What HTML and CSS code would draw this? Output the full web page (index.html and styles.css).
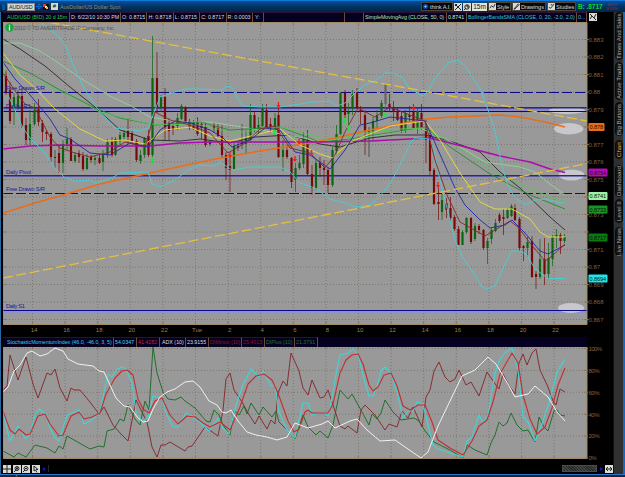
FILE: index.html
```html
<!DOCTYPE html>
<html lang="en">
<head>
    <meta charset="UTF-8">
    <title>AUD/USD Chart</title>
    <link rel="stylesheet" href="styles.css">
</head>
<body>
<div class="window">
    <header class="titlebar">
        <span class="link-dot"></span>
        <span class="symbol">AUD/USD</span>
        <span class="picker">✣</span>
        <svg class="flag" viewBox="0 0 6 6"><path fill="#111" d="M0 0h6v6H0z"/><path fill="#e33" d="M0 0h3v3H0z"/><path fill="#fff" d="M2 2h2v2H2z"/><path fill="#fb3" d="M3 3h2v2H3z"/></svg>
        <span class="hash">#</span>
        <span class="desc">AusDollar/US Dollar Spot</span>
        <div class="tools">
            <span class="tool think"><svg viewBox="0 0 8 8"><circle cx="4" cy="4" r="3.2" fill="#0a3f94"/><circle cx="4" cy="4" r="1.2" fill="#adf"/></svg>think A.I.</span>
            <svg class="icon" viewBox="0 0 8 8"><path d="M1 1l6 6M7 1L1 7M1 3l2-2"/></svg>
            <svg class="icon" viewBox="0 0 8 8"><circle cx="4" cy="4" r="2.2"/><path d="M1 7l2-2M4 2v2h2"/></svg>
            <span class="period">15m</span>
            <span class="tool style"><svg class="icon" viewBox="0 0 8 8"><path d="M1 6l2-3 2 2 2-4"/></svg>Style</span>
            <span class="tool draw"><svg class="icon" viewBox="0 0 8 8"><path d="M1 7l5-6 1 1-5 5z"/></svg>Drawings</span>
            <span class="tool studies"><svg class="icon" viewBox="0 0 8 8"><path d="M1 5l2 1 4-5M3 2h2"/></svg>Studies</span>
            <span class="bid">B: .8717</span>
            <span class="change">-.0082<br>-0.93%</span>
        </div>
    </header>

    <div class="body">
        <main class="charts">
            <div class="info price-info">
                <span class="cell name">AUD/USD (BID) 20 d 15m</span>
                <span class="cell date">D: 6/22/10 10:30 PM</span>
                <span class="cell ohlc">O: 0.8715</span>
                <span class="cell ohlc">H: 0.8718</span>
                <span class="cell ohlc">L: 0.8715</span>
                <span class="cell ohlc">C: 0.8717</span>
                <span class="cell ohlc">R: 0.0003</span>
                <span class="cell yval">Y:</span>
                <span class="cell blank"></span>
                <span class="cell gap"></span>
                <span class="cell sma">SimpleMovingAvg (CLOSE, 50, 0)</span>
                <span class="cell smaval">0.8741</span>
                <span class="cell boll">BollingerBandsSMA (CLOSE, 0, 20, -2.0, 2.0)</span>
                <span class="cell more">0...</span>
                <svg class="icon corner" viewBox="0 0 8 8"><path d="M1 6l2-3 2 2 2-4M1 1l6 6"/></svg>
            </div>

            <svg class="price" viewBox="3 22 610 315">
                <rect class="plot" x="3" y="22" width="584" height="302"/>
                <g id="price-grid"></g>

                <path class="band" d="M3 107.500h584v4H3z"/>
                <path class="glow" d="M3 110h584M3 177.200h584M3 312h584"/>
                <g class="zone">
                    <ellipse cx="567" cy="110.5" rx="18" ry="3.5"/>
                    <ellipse cx="568.7" cy="128.7" rx="14.7" ry="5.7"/>
                    <ellipse cx="571.5" cy="175" rx="12.8" ry="5.5"/>
                    <ellipse cx="571" cy="308" rx="13" ry="5"/>
                </g>
                <path class="level soft" d="M3 107.800h584M3 175.8h584"/>
                <path class="level" d="M3 111.5h584M3 310.5h584"/>
                <path class="level dashed" d="M3 92.5h584M3 193.5h584"/>

                <g id="candles"></g>

                <polyline class="line black" points="3,39 20,49 45,66 70,87 95,107 120,130 150,140 180,141 200,139 230,143 255,137 290,135 320,144 340,147 370,138 395,135 425,135 450,141 480,152 500,172 520,188 550,217 565,230"/>
                <polyline class="line pale" points="3,43 20,43 40,51 60,64 80,78 110,96 131,106 150,117 180,122 210,122 260,130 320,141 360,138 420,128 450,141 485,162 520,167 535,172 550,184 565,195"/>
                <polyline class="line green" points="3,61 30,73 60,90 95,108 120,118 155,125 200,122 230,130 280,127 320,142 350,139 425,127 450,147 490,174 520,190 535,197 565,209"/>
                <polyline class="line lime" points="3,70 30,78 70,96 100,112 150,124 200,125 235,133 280,127 330,140 370,132 400,129 425,128 450,142 500,175 540,193 565,202"/>
                <polyline class="line orange" points="3,213 35,203 70,193 100,184 150,173 210,160 260,151 310,143 340,137 360,132 400,124 427,119 450,117 500,115 520,117 545,122 565,127"/>
                <polyline class="line magenta" points="3,149 30,146 60,145 100,146 150,146 180,143 210,142 320,142 370,141 430,138 450,143 500,156 530,162 550,169 565,172.5"/>
                <polyline class="line cyan" points="40,22 50,30 57,35 65,45 75,69 85,90 97,108 115,128 140,131 148,128 155,110 160,97 175,92 185,89 200,89 222,90 226,87 231,86 235,94 243,106 260,107 280,107 300,104 312,102 330,101 337,106 345,103 355,93 365,85 375,81 385,73 392,73 402,77 410,89 423,96 428,91 436,77 448,63 458,60 465,66 480,89 487,107 495,131 502,166 508,186 515,198 526,205 535,200 545,199 560,203 565,202"/>
                <polyline class="line cyan" points="8,95 23,128 30,138 45,153 55,168 65,178 75,181 90,180 95,183 112,178 120,173 148,172 152,184 160,187 175,180 188,170 200,165 215,166 220,162 232,170 250,167 280,167 290,172 300,183 315,188 330,199 345,203 355,207 370,205 380,196 390,184 400,165 405,155 410,143 415,138 430,139 435,155 440,180 448,212 455,240 463,258 475,275 482,287 487,289 495,286 505,264 512,251 520,251 527,255 535,269 548,278.5 565,278.5"/>
                <polyline class="line yellow" points="3,53 20,75 35,88 55,109 80,129 105,141 125,140 145,144 165,130 190,127 210,136 230,141 255,135 280,129 300,145 320,154 332,158 350,142 370,134 390,126 425,121 440,140 460,173 480,202 495,209 512,209 530,219 540,232 548,237 565,237"/>
                <polyline class="line blue" points="3,62 15,79 30,95 40,107 50,119 60,135 70,139 90,153 110,155 130,143 148,147 160,130 175,121 190,123 210,130 222,137 232,147 250,140 265,128 280,130 295,152 310,155 330,169 345,150 360,125 370,123 390,117 425,121 435,143 455,188 465,205 479,219 490,228 505,225 512,220 525,233 540,251 548,254 565,245"/>
                <polyline class="line maroon" points="3,73 18,95 25,104 35,108 50,137 60,148 75,153 90,157 110,152 125,142 145,147 155,112 170,120 190,125 210,133 228,153 245,143 260,129 275,126 290,148 310,153 325,168 335,155 345,132 358,108 375,117 390,107 425,121 435,160 447,195 460,222 485,236 510,221 518,227 530,243 545,261 552,256 565,244"/>

                <path class="trend" d="M36 20L587 121M3 278L587 163.5"/>
                <g id="arrows"></g>

                <g class="level-name">
                    <text x="6" y="90" textLength="39">Free Drawn S/R</text>
                    <text x="6" y="107.5" textLength="25">Daily R1</text>
                    <text x="6" y="174" textLength="25">Daily Pivot</text>
                    <text x="6" y="191" textLength="39">Free Drawn S/R</text>
                    <text x="6" y="308" textLength="19">Daily S1</text>
                </g>
                <circle cx="9.5" cy="27.5" r="4.2" fill="#19a53c"/>
                <path d="M9.5 24.7v1M9.5 26.5v4" stroke="#fff" stroke-width="1.3"/>
                <text class="copy" x="14" y="30" textLength="101">2010 © TD AMERITRADE IP Company, Inc.</text>
                <path class="frame" d="M3 22V324.500H587V22.500H3"/>
                <g id="price-axis" class="axis"></g>
                <g id="time-axis" class="axis"></g>
                <g id="tags" class="tags"></g>
            </svg>

            <div class="info study-info">
                <span class="cell smi">StochasticMomentumIndex (46.0, -46.0, 3, 5)</span>
                <span class="cell smival">54.0347</span>
                <span class="cell redval">41.4282</span>
                <span class="cell adx">ADX (10)</span>
                <span class="cell adxval">23.9155</span>
                <span class="cell minus">DIMinus (10)</span>
                <span class="cell minusval">25.4613</span>
                <span class="cell plus">DIPlus (10)</span>
                <span class="cell plusval">21.3791</span>
            </div>

            <svg class="study" viewBox="3 347 610 116">
                <rect class="plot" x="3" y="347" width="584" height="111"/>
                <g id="study-grid"></g>
                <polyline class="line dminus" points="3,390 7,386 10,355 18,380 26,357 33,384 38,398 47,373 51,375 55,369 60,388 67,401 71,388 74,390 80,390 90,402 99,414 104,407 113,425 120,433 128,441 136,400 140,408 147,422 152,447 157,457 161,445 165,445 170,442 185,451 188,447 192,446 205,427 218,436 223,410 226,379 230,373 234,390 242,402 248,413 255,424 259,416 267,429 271,420 275,424 278,393 283,381 287,386 291,353 299,371 303,388 308,395 312,380 320,398 324,397 328,390 334,408 340,426 345,429 348,426 357,433 361,410 365,405 375,415 385,430 389,424 397,427 402,411 408,418 413,407 422,427 426,397 430,390 434,371 439,362 445,377 450,382 455,379 459,370 466,385 471,382 479,396 487,372 493,381 499,389 503,374 510,387 515,394 519,363 523,354 527,365 532,353 536,349 540,370 548,387 553,401 556,405 560,389 565,392"/>
                <polyline class="line dplus" points="3,451 14,457 18,453 26,457 35,445 47,448 55,453 59,446 63,449 67,436 90,449 99,446 104,447 107,431 114,429 120,419 124,421 128,405 135,419 140,425 145,401 149,410 153,347 157,373 163,392 168,399 175,400 181,397 185,401 195,408 206,421 210,422 214,410 219,415 223,425 230,435 234,411 239,415 244,406 247,414 251,403 259,415 263,407 272,417 276,411 279,422 287,430 295,439 303,415 308,427 316,435 320,431 328,438 333,425 340,390 348,399 352,394 362,412 369,425 372,414 377,419 381,413 385,400 393,412 401,420 414,418 419,421 425,431 434,442 450,450 463,458 467,445 475,450 487,455 491,443 495,435 499,422 503,426 507,423 511,413 517,425 523,431 528,430 535,442 539,417 544,427 548,431 554,411 557,410 560,415 565,416"/>
                <polyline class="line smi-fast" points="3,413 10,441 18,426 26,439 30,434 35,415 39,409 46,414 50,428 55,438 59,441 67,415 79,410 84,424 92,420 100,412 104,392 108,374 112,377 116,370 122,367 126,369 132,383 136,412 143,422 148,417 153,396 162,398 166,413 173,427 178,427 186,413 191,416 200,422 209,431 218,418 223,428 229,434 236,405 243,385 251,369 259,377 263,371 271,386 275,385 279,412 287,430 295,438 299,420 303,403 308,403 312,415 320,413 325,413 328,416 332,398 337,369 340,355 348,353 353,349 358,355 365,382 369,396 373,396 377,387 381,371 385,367 391,373 397,392 403,418 408,411 413,411 417,402 423,404 428,425 433,445 438,449 450,453 463,457 467,441 472,437 479,415 483,423 488,415 495,373 500,359 505,353 512,348 518,370 523,417 528,422 535,441 542,424 550,400 557,372 565,359"/>
                <polyline class="line smi-slow" points="3,411 10,430 15,434 19,429 26,435 30,434 38,416 45,414 50,424 59,436 63,435 71,416 79,412 84,419 92,417 100,413 106,394 115,378 122,371 127,370 133,375 138,399 143,409 149,413 155,401 162,398 170,415 178,424 187,416 195,417 203,423 210,427 220,422 230,430 240,407 248,384 256,376 264,374 272,380 278,393 288,421 294,432 299,429 305,412 308,410 312,413 328,413 333,404 340,373 346,360 352,355 358,354 363,364 369,385 373,391 378,387 384,375 391,373 397,386 403,406 410,410 418,405 425,405 432,422 438,440 450,448 463,455 472,441 479,426 487,420 493,402 500,374 512,353 518,363 523,395 530,419 537,434 545,427 552,408 558,385 565,368"/>
                <polyline class="line adx-line" points="3,392 8,387 14,371 20,365 27,353 32,351 40,356 47,354 55,348 63,351 68,359 78,364 93,366 99,371 104,372 110,385 116,398 124,406 130,407 138,418 143,422 148,421 153,409 160,397 167,392 175,389 185,382 193,381 200,387 209,401 217,405 222,412 226,413 231,410 238,421 247,432 256,435 267,437 277,440 287,437 295,423 308,428 322,424 328,421 335,428 350,421 357,419 367,430 380,441 395,440 405,447 421,458 428,452 438,426 450,401 462,376 475,370 488,357 496,364 508,384 515,397 528,394 535,386 548,397 557,412 565,421"/>
                <path class="frame" d="M3 347V458.500H587V347"/>
                <g id="percent-axis" class="axis"></g>
            </svg>

            <div class="scrollrow">
                <svg class="icon" viewBox="0 0 8 8"><path d="M4 0v8M0 4h8"/></svg>
                <svg class="icon" viewBox="0 0 8 8"><circle cx="4" cy="3.500" r="2"/><path d="M1 7l2-2M4 2v3M3 3.500h2"/></svg>
                <svg class="icon" viewBox="0 0 8 8"><circle cx="4" cy="3.500" r="2"/><path d="M1 7l2-2M3 3.500h2"/></svg>
                <svg class="icon" viewBox="0 0 8 8"><path d="M2 1v5l1.500-1L5 7.500M2 1l4 3.500H4"/></svg>
                <span class="arrow left"></span>
                <span class="track"><span class="thumb"></span></span>
                <span class="arrow right"></span>
                <svg class="icon" viewBox="0 0 8 8"><path d="M1 4h6M3 2L1 4l2 2M5 2l2 2-2 2"/></svg>
            </div>
        </main>

        <nav class="tabs">
            <span class="tab times">Times And Sales</span>
            <span class="tab active-trader">Active Trader</span>
            <span class="tab buttons">Big Buttons</span>
            <span class="tab chart">Chart</span>
            <span class="tab dash">Dashboard</span>
            <span class="tab level2">Level II</span>
            <span class="tab news">Live News</span>
        </nav>
    </div>
    <footer class="bottom"><svg class="handle" viewBox="0 0 13 3"><path fill="#222" d="M0 0h13v3H0z"/><path fill="#b88716" d="M6.500 0l2 2h-4z"/></svg></footer>
</div>
<script src="script.js"></script>
</body>
</html>
```
FILE: styles.css
```css
* {
    box-sizing: border-box;
}
body {
    margin: 0;
    background: #000;
    font-family: "Liberation Sans", Arial, sans-serif;
    overflow: hidden;
}
.window {
    width: 625px;
    height: 477px;
    display: flex;
    flex-direction: column;
    border-top: 1px solid #1478d8;
}
svg {
    display: block;
    flex: none;
}

/* title bar */
.titlebar {
    height: 11px;
    flex: none;
    display: flex;
    align-items: center;
    padding-left: 2px;
    background: linear-gradient(#07509a, #013565 50%, #012448);
    font-size: 6px;
    line-height: 8px;
    white-space: nowrap;
}
.link-dot {
    width: 3px;
    height: 6px;
    margin-right: 2px;
    background: #07539a;
}
.symbol {
    width: 28px;
    height: 8px;
    padding-left: 1px;
    background: #d4d4ce;
    color: #111;
    border: 1px solid #888;
    line-height: 6px;
    font-size: 5.4px;
    letter-spacing: -.1px;
}
.picker {
    width: 8px;
    color: #1479dc;
    text-align: center;
    font-size: 7px;
}
.flag {
    width: 6px;
    height: 6px;
    margin-right: 1px;
}
.hash {
    width: 7px;
    height: 7px;
    margin: 0 2px 0 1px;
    background: #d8d8d0;
    color: #000;
    line-height: 7px;
    text-align: center;
}
.desc {
    color: #948869;
    font-size: 5.4px;
}
.tools {
    display: flex;
    align-items: center;
    gap: 1px;
    width: 204px;
    margin-left: auto;
    font-size: 6px;
    color: #d4d4d0;
}
.tool {
    flex: none;
    display: flex;
    align-items: center;
    gap: 1px;
    height: 9px;
    background: #050a10;
    border: 1px solid #4c463b;
    font-size: 5.7px;
    letter-spacing: -.1px;
}
.tool svg {
    width: 7px;
    height: 7px;
}
.think { width: 32px; }
.style { width: 23px; }
.draw { width: 34px; }
.studies { width: 29px; }
.icon {
    width: 8px;
    height: 8px;
    background: #dcdcd6;
    fill: none;
    stroke: #222;
    stroke-width: 1;
}
.period {
    width: 15px;
    flex: none;
    height: 8px;
    background: #e4e4df;
    color: #111;
    text-align: center;
    line-height: 8px;
    font-size: 6.5px;
}
.bid {
    flex: none;
    width: 27px;
    padding-left: 1px;
    color: #12d52c;
    font-size: 6.4px;
    font-weight: bold;
}
.change {
    color: #c31720;
    font-size: 4.1px;
    line-height: 4px;
}

.body {
    flex: 1;
    display: flex;
    min-height: 0;
}
.charts {
    width: 613px;
    padding-left: 2px;
    border-left: 1px solid #2569a0;
}

/* info strips above each plot */
.info {
    width: 610px;
    height: 10px;
    display: flex;
    font-size: 5.3px;
    line-height: 9px;
    color: #dcdcdf;
    white-space: nowrap;
}
.cell {
    flex: none;
    padding-left: 2px;
    overflow: hidden;
    background: #05001f;
    border-right: 1px solid #6a4a38;
    border-top: 1px solid #2a1230;
    line-height: 9px;
}
.name { width: 67px; padding-left: 4px; color: #22cb3f; letter-spacing: -.05px; }
.date { width: 51px; padding-left: 1px; letter-spacing: -.03px; }
.ohlc { width: 26.4px; padding-left: 1px; }
.yval { width: 11px; }
.blank { width: 81px; }
.gap { width: 19px; }
.sma { width: 83px; padding-left: 1px; color: #b0e2b1; letter-spacing: -.03px; }
.smaval { width: 20px; color: #c4ebc4; padding-left: 1px; }
.boll { width: 110px; color: #2cc8dc; padding-left: 1px; }
.more { width: 10px; padding-left: 1px; color: #2cc8dc; }
.corner { margin: 1px 0 0 2px; }
.study-info { width: 584px; background: #05001f; }
.smi { width: 111px; padding-left: 4px; color: #35cfeb; letter-spacing: -.03px; }
.smival { width: 23px; color: #40d8f2; padding-left: 1px; }
.redval { width: 23px; color: #c02340; padding-left: 1px; }
.adx { width: 26px; }
.adxval { width: 23px; padding-left: 1px; }
.minus { width: 33px; color: #8d1830; padding-left: 1px; }
.minusval { width: 23px; color: #8d1830; padding-left: 1px; }
.plus { width: 30px; color: #1b7636; padding-left: 1px; }
.plusval { width: 23px; color: #1b7636; padding-left: 1px; }

/* plots */
.price {
    width: 610px;
    height: 315px;
}
.study {
    width: 610px;
    height: 116px;
}
.plot { fill: #999; }
.frame { fill: none; stroke: #a18b66; stroke-width: 1; }
.grid { stroke: #776e5f; stroke-width: .8; stroke-dasharray: 1 2; fill: none; }
.tick { stroke: #8e7043; stroke-width: .8; }
.band { fill: #7777a8; }
.glow { stroke: #8d8dd5; stroke-width: 1.5; }
.zone { fill: #d2d2d8; fill-opacity: .8; }
.level { stroke: #080888; stroke-width: 1.2; fill: none; }
.level.soft { stroke: #28288a; stroke-width: 1.6; }
.level.dashed { stroke-dasharray: 10 3; }
.level-name { fill: #1a1a9b; font-size: 5.8px; }
.copy { fill: #555; font-size: 5.6px; }
.line { fill: none; stroke-width: .9; stroke-linejoin: round; }
.black { stroke: #292929; }
.pale { stroke: #8fd49b; }
.green { stroke: #238c31; }
.lime { stroke: #59c453; }
.orange { stroke: #ec6c18; stroke-width: 1.4; }
.magenta { stroke: #ac0bad; stroke-width: 1.4; }
.cyan { stroke: #46cfd2; }
.yellow { stroke: #eddf38; }
.blue { stroke: #2424a7; }
.maroon { stroke: #85262b; }
.trend { stroke: #e6bf3c; stroke-width: 1.3; stroke-dasharray: 10 3.5; fill: none; }
.up { stroke: #0c650f; }
.down { stroke: #790909; }
.flat { stroke: #303030; }
.grey { stroke: #666; }
.wick { stroke-width: .7; }
.candle { stroke-width: 2.2; }
.dminus { stroke: #832226; }
.dplus { stroke: #176a20; }
.smi-fast { stroke: #3fd5d7; stroke-width: 1.1; }
.smi-slow { stroke: #c52d31; stroke-width: 1.1; }
.adx-line { stroke: #f0f0f0; stroke-width: 1; }
.axis text { fill: #85603f; font-size: 6px; }
#time-axis text { fill: #9a7d5c; }
.tags text { fill: #111; font-size: 5.6px; }

/* bottom scroll row */
.scrollrow {
    height: 9px;
    width: 610px;
    display: flex;
    align-items: center;
    gap: 1.5px;
    margin-top: 1px;
}
.arrow {
    width: 0;
    height: 0;
    flex: none;
    border: 2.500px solid transparent;
    margin: 0 1px;
}
.left { border-right: 3px solid #1216c8; border-left: 0; }
.right { border-left: 3px solid #1216c8; border-right: 0; }
.track {
    flex: 1;
    height: 7px;
    display: flex;
    justify-content: flex-end;
    border-left: 1px solid #272727;
}
.thumb {
    width: 35px;
    background: repeating-linear-gradient(45deg, #444 0 1px, #292929 1px 2px);
    border: 1px solid #4b4b4b;
}

/* right side tabs */
.tabs {
    width: 12px;
    display: flex;
    flex-direction: column;
    align-items: center;
    gap: 2px;
    background: #303030;
    border-left: 1px solid #111;
    border-right: 2px solid #146ac0;
}
.tab {
    width: 8px;
    flex: none;
    display: flex;
    align-items: center;
    justify-content: center;
    writing-mode: vertical-rl;
    transform: rotate(180deg);
    background: #141414;
    border: 1px solid #0b0b0b;
    border-radius: 4px;
    color: #aaa;
    font-size: 6.1px;
    line-height: 6px;
    white-space: nowrap;
}
.times { height: 48px; }
.active-trader { height: 38px; }
.buttons { height: 34px; }
.chart { height: 19px; margin-top: 2px; color: #d9a72d; }
.dash { height: 32px; margin-top: 4px; }
.level2 { height: 24px; }
.news { height: 29px; margin-top: 2px; }

.bottom {
    height: 3px;
    flex: none;
    display: flex;
    background: #13273a;
    border-top: 1px solid #2a78cf;
}
.handle {
    width: 13px;
    height: 2px;
    margin-left: 10px;
}
```
FILE: script.js
```javascript
const $ = id => document.getElementById(id)

// time and price scales, in plot units
const hours = [14, 16, 18, 20, 22, 'Tue', 2, 4, 6, 8, 10, 12, 14, 16, 18, 20, 22]
const timeX = i => 32.5 + i * 32.6
const priceY = p => 39.5 + (0.883 - p) * 17500

// these two sit under the price tags
const covered = [0.878, 0.874, 0.872]

let grid = '', axis = '', times = ''
hours.forEach((h, i) => {
    const x = timeX(i)
    grid += `<path class="grid" d="M${x} 22V324"/><path class="tick" d="M${x} 22v3M${x} 321v3"/>`
    times += `<text x="${x + 1.5}" y="332" text-anchor="middle">${h}</text>`
})
for (let i = 0; i <= 16; i++) {
    const p = +(0.883 - i / 1000).toFixed(3)
    const y = priceY(p)
    grid += `<path class="grid" d="M3 ${y}H587"/><path class="tick" d="M3 ${y}h3M584 ${y}h5"/>`
    if (!covered.includes(p)) {
        axis += `<text x="588.5" y="${y + 2.3}">${p}</text>`
    }
}
$('price-grid').innerHTML = grid
$('price-axis').innerHTML = axis
$('time-axis').innerHTML = times

let studyGrid = '', percents = ''
hours.forEach((h, i) => {
    studyGrid += `<path class="grid" d="M${timeX(i)} 347V458"/><path class="tick" d="M${timeX(i)} 347v2M${timeX(i)} 456v2"/>`
})
for (let i = 0; i <= 5; i++) {
    const y = 348.5 + i * 21.9
    studyGrid += `<path class="grid" d="M3 ${y}H587"/><path class="tick" d="M584 ${y}h4"/>`
    percents += `<text x="588.5" y="${y + 2.3}" textLength="${i ? (i === 5 ? 8 : 11) : 13.5}">${100 - i * 20}%</text>`
}
$('study-grid').innerHTML = studyGrid
$('percent-axis').innerHTML = percents

// x, high, body top, body bottom, low, direction
const candles = [
    [6,70,76,92,95,'d'],[10,82,90,121,124,'d'],[14,93,97,109,125,'u'],[18,90,96,107,110,'u'],[22,88,96,126,128,'d'],
    [26,118,125,140,145,'d'],[30,110,124,140,145,'u'],[34.5,103,110,124,126,'u'],[38.5,99,109,122,126,'d'],[42.5,120,123,132,142,'d'],
    [46.5,130,132,134,140,'d'],[51,132,134,157,162,'d'],[55,150,157,158,168,'f'],[59,145,153,163,173,'d'],[63,140,144,163,173,'u'],
    [67,128,139,144,150,'u'],[71,137,139,161,161,'d'],[75,152,155,161,163,'u'],[79,150,153,157,163,'d'],[83,152,156,169,171,'d'],
    [87,154,158,169,170,'u'],[91,155,157,160,163,'d'],[95,155,158,160,165,'u'],[99.5,154,158,163,164,'d'],[103,150,155,162,171,'u'],
    [107.5,139,142,155,158,'u'],[112,137,142,155,157,'d'],[115.5,137,139,155,156,'u'],[120,132,135,141,145,'u'],[124,130,133,137,140,'u'],
    [128,118,131,137,144,'d'],[132,131,133,141,143,'d'],[136.5,139,141,160,162,'d'],[140.5,150,155,161,164,'u'],[144.5,137,138,155,158,'u'],
    [148.5,130,136,155,157,'d'],[152.5,36,78,155,157,'u'],[157,52,78,107,113,'d'],[161,95,97,107,112,'u'],[165,88,97,127,141,'d'],
    [169,118,123,131,141,'d'],[173,122,126,130,135,'d'],[177.5,113,118,126,130,'u'],[181.5,104,106,119,120,'u'],[185.5,106,108,122,123,'d'],
    [189.5,119,121,127,130,'d'],[193.5,120,122,129,130,'d'],[197.5,117,122,134,136,'d'],[201.5,122,124,128,139,'d'],[205.5,122,127,145,147,'d'],
    [210,140,142,144,146,'f'],[214,122,126,129,133,'d'],[218,124,128,136,137,'d'],[222,125,136,155,158,'d'],[226,152,155,168,180,'d'],
    [230,155,166,170,192,'d'],[234,143,146,169,170,'u'],[238,141,146,148,151,'f'],[242,124,142,144,149,'f'],[246,130,138,144,153,'u'],
    [250.5,104,115,140,142,'u'],[254.5,112,115,129,132,'d'],[258.5,117,125,130,134,'u'],[262.5,104,108,126,127,'u'],[266.5,104,110,127,127,'d'],
    [270.5,118,124,129,133,'d'],[275,113,118,129,132,'u'],[278.5,106,115,157,158,'d'],[283,140,150,157,171,'u'],[287,145,150,157,159,'d'],
    [291.5,157,158,182,188,'d'],[295.5,163,168,180,192,'u'],[299.5,155,163,168,170,'u'],[303.5,132,138,164,168,'u'],[307.5,130,140,174,175,'d'],
    [312,165,174,188,195,'d'],[316,159,163,188,190,'u'],[320,157,163,168,177,'d'],[324,160,168,170,185,'d'],[328,167,170,185,193,'d'],
    [332.5,147,150,185,187,'u'],[336.5,125,134,151,155,'u'],[340.5,92,93,134,135,'u'],[345,90,93,115,118,'d'],[348.5,103,112,114,127,'u'],
    [352.5,90,94,109,115,'u'],[357,88,92,108,109,'d'],[360.5,106,110,112,124,'d'],[365,110,115,132,155,'d'],[369,127,131,132,157,'f'],
    [373,117,121,133,140,'u'],[377,110,115,121,128,'u'],[381.5,100,103,116,118,'u'],[385.5,83,84,104,108,'g'],[389.5,94,104,107,112,'d'],
    [393.5,101,107,112,121,'d'],[397.5,107,111,120,121,'d'],[401.5,112,116,131,133,'d'],[405.5,110,113,131,133,'u'],[409.5,106,115,117,122,'f'],
    [413.5,104,112,129,130,'d'],[417.5,107,111,129,134,'u'],[421.5,104,113,128,130,'d'],[426,120,127,140,163,'d'],[430,130,135,171,175,'d'],
    [434,168,170,204,205,'d'],[438.5,186,202,204,220,'d'],[442,194,200,212,220,'u'],[446.5,198,203,210,218,'d'],[450.5,197,208,218,222,'d'],
    [454.5,215,217,229,231,'d'],[458.5,226,229,245,245,'d'],[462.5,230,232,245,245,'u'],[466.5,217,218,232,234,'u'],[471,217,218,242,244,'d'],
    [475,223,226,239,241,'u'],[479,224,226,230,234,'d'],[483.5,229,230,248,250,'d'],[487.5,238,241,248,264,'u'],[491.5,228,230,239,244,'u'],
    [495.5,219,223,231,232,'u'],[499.5,213,215,221,223,'d'],[503.5,209,217,219,235,'d'],[507.5,208,210,218,219,'u'],[511.5,204,206,216,217,'u'],
    [515,204,208,220,221,'d'],[519.5,217,219,248,251,'d'],[523.5,245,246,248,261,'d'],[527.5,237,242,248,257,'u'],[532,236,241,277,278,'d'],
    [536,271,274,277,289,'d'],[540,239,259,277,279,'u'],[544.5,238,259,274,285,'d'],[548.5,243,258,274,279,'u'],[552.5,235,237,259,266,'u'],
    [556.5,229,235,237,248,'u'],[560.5,233,235,241,254,'d'],[564.5,234,237,241,243,'u']
]
const kinds = { u: 'up', d: 'down', f: 'flat', g: 'grey' }
$('candles').innerHTML = candles.map(([x, hi, top, bottom, lo, k]) =>
    `<g class="${kinds[k]}"><path class="wick" d="M${x} ${hi}V${lo}"/><path class="candle" d="M${x} ${top}V${bottom}"/></g>`
).join('')

// signal arrows
const sells = [[230,155],[278.5,105],[295,159],[299,142],[311.5,153],[413.5,108],[438,185]]
const buys = [[152.5,160],[274.5,132],[344.5,121],[348.5,128],[385,115]]
$('arrows').innerHTML =
    sells.map(([x, y]) => `<path fill="#f02222" d="M${x - .7} ${y - 3}h1.4v3h1.5l-2.2 3-2.2-3h1.5z"/>`).join('') +
    buys.map(([x, y]) => `<path fill="#20e33a" d="M${x - .7} ${y + 3}h1.4v-3h1.5l-2.2-3-2.2 3h1.5z"/>`).join('')

// price tags on the axis
const tags = [
    ['0.878', 127, '#ed6b16', 16], ['0.8754', 172.5, '#b50cb5', 19], ['0.8741', 196, '#9df2a3', 19],
    ['0.8733', 209.5, '#169620', 19], ['0.8717', 237.5, '#087b10', 19], ['0.8694', 278.5, '#21e6e9', 19]
]
$('tags').innerHTML = tags.map(([t, y, color, w]) =>
    `<rect x="588.5" y="${y - 4}" width="${w}" height="8" rx="1" fill="${color}"/><text x="589.5" y="${y + 2}" textLength="${w - 2.5}">${t}</text>`
).join('')
```
